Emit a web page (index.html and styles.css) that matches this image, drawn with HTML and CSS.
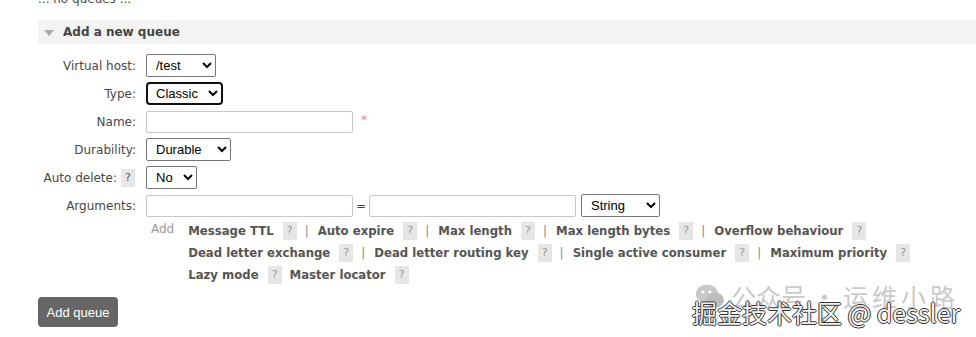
FILE: index.html
```html
<!DOCTYPE html>
<html lang="en">
<head>
    <meta charset="UTF-8">
    <title>Queues</title>
    <link rel="stylesheet" href="styles.css">
</head>
<body>
    <div class="main">
        <p class="empty">... no queues ...</p>

        <div class="section">
            <h2 class="section-head"><span class="toggle"></span>Add a new queue</h2>

            <form class="form">
                <label class="lbl">Virtual host:</label>
                <div class="ctl">
                    <select class="w-vhost"><option>/test</option></select>
                </div>

                <label class="lbl">Type:</label>
                <div class="ctl">
                    <select class="w-type focused"><option>Classic</option></select>
                </div>

                <label class="lbl">Name:</label>
                <div class="ctl">
                    <input type="text" class="w-text"><span class="mand">*</span>
                </div>

                <label class="lbl">Durability:</label>
                <div class="ctl">
                    <select class="w-dur"><option>Durable</option></select>
                </div>

                <label class="lbl">Auto delete: <span class="help">?</span></label>
                <div class="ctl">
                    <select class="w-no"><option>No</option></select>
                </div>

                <label class="lbl">Arguments:</label>
                <div class="ctl">
                    <input type="text" class="w-text"><span class="eq">=</span><input type="text" class="w-text">
                    <select class="w-str"><option>String</option></select>
                </div>

                <div></div>
                <div class="args">
                    <span class="add">Add</span>
                    <div class="arg-list">
                        <div class="arg-line">
                            <b>Message TTL</b><span class="help">?</span><span class="sep">|</span>
                            <b>Auto expire</b><span class="help">?</span><span class="sep">|</span>
                            <b>Max length</b><span class="help">?</span><span class="sep">|</span>
                            <b>Max length bytes</b><span class="help">?</span><span class="sep">|</span>
                            <b>Overflow behaviour</b><span class="help">?</span>
                        </div>
                        <div class="arg-line">
                            <b>Dead letter exchange</b><span class="help">?</span><span class="sep">|</span>
                            <b>Dead letter routing key</b><span class="help">?</span><span class="sep">|</span>
                            <b>Single active consumer</b><span class="help">?</span><span class="sep">|</span>
                            <b>Maximum priority</b><span class="help">?</span>
                        </div>
                        <div class="arg-line">
                            <b>Lazy mode</b><span class="help">?</span>
                            <b>Master locator</b><span class="help">?</span>
                        </div>
                    </div>
                </div>
            </form>

            <button class="btn" type="button">Add queue</button>
        </div>
    </div>

    <div class="watermark">
        <div class="wm-top">
            <svg class="wechat" width="30" height="26" viewBox="0 0 30 26">
                <ellipse cx="12" cy="11" rx="11" ry="9.5" fill="#c9c9c9"/>
                <circle cx="8" cy="9" r="1.6" fill="#fff"/>
                <circle cx="15" cy="9" r="1.6" fill="#fff"/>
                <ellipse cx="20" cy="17" rx="9" ry="7.5" fill="#bdbdbd"/>
            </svg>
            <span>公众号</span><span class="wm-dot">·</span><span class="wm-name">运维小路</span>
        </div>
        <div class="wm-bottom">掘金技术社区 @ dessler</div>
    </div>
</body>
</html>
```

FILE: styles.css
```css
body {
    margin: 0;
    font-family: "DejaVu Sans", Verdana, sans-serif;
    font-size: 12px;
    color: #484848;
    background: #ffffff;
    overflow: hidden;
}

.main {
    padding-left: 38px;
}

.empty {
    margin: -9px 0 0 0;
    line-height: 16px;
    height: 13px;
    color: #484848;
}

.section-head {
    margin: 16px 0 0 0;
    height: 24px;
    display: flex;
    align-items: center;
    background: #f3f3f3;
    font-size: 12px;
    font-weight: bold;
    color: #444;
}

.toggle {
    width: 0;
    height: 0;
    margin: 1px 9px 0 6px;
    border-left: 5px solid transparent;
    border-right: 5px solid transparent;
    border-top: 6px solid #aaa;
}

.form {
    display: grid;
    grid-template-columns: 98px auto;
    column-gap: 10px;
    row-gap: 5px;
    margin-top: 10px;
}

.lbl {
    display: flex;
    justify-content: flex-end;
    align-items: center;
    gap: 4px;
    height: 23px;
    white-space: nowrap;
}

.ctl {
    display: flex;
    align-items: center;
    height: 23px;
}

select {
    height: 23px;
    font-family: "Liberation Sans", Arial, sans-serif;
    font-size: 13px;
    color: #000;
    background: #fff;
    border: 1px solid #767676;
    border-radius: 2px;
    padding: 0 2px 0 5px;
}

select.focused {
    border: 2px solid #111;
    border-radius: 4px;
    padding-left: 4px;
}

.w-vhost { width: 70px; }
.w-type { width: 77px; }
.w-dur { width: 85px; }
.w-no { width: 51px; }
.w-str { width: 79px; margin-left: 5px; }

input.w-text {
    box-sizing: border-box;
    width: 207px;
    height: 22px;
    border: 1px solid #c8c8c8;
    border-radius: 2px;
    margin: 0;
}

.mand {
    color: #e88;
    margin-left: 8px;
    margin-top: -4px;
    font-size: 12px;
}

.eq {
    width: 16px;
    text-align: center;
}

.help {
    display: inline-block;
    width: 14px;
    height: 18px;
    line-height: 18px;
    text-align: center;
    background: #e6e6e6;
    color: #999;
    font-size: 11px;
    font-weight: normal;
}

.lbl .help {
    color: #555;
    margin-right: 1px;
}

.args {
    display: flex;
    align-items: flex-start;
    margin-top: -2px;
}

.add {
    color: #999;
    margin: 0 14px 0 5px;
    line-height: 18px;
}

.arg-line {
    display: flex;
    align-items: center;
    height: 22px;
    white-space: nowrap;
}

.arg-line b {
    color: #555;
    font-size: 11.7px;
    margin-right: 9px;
}

.arg-line .help {
    margin-right: 8px;
}

.sep {
    color: #888;
    margin-right: 9px;
}

.btn {
    margin-top: 11px;
    width: 80px;
    height: 30px;
    border: none;
    border-radius: 4px;
    background: #666;
    color: #fff;
    font-family: "Liberation Sans", Arial, sans-serif;
    font-size: 13px;
    padding: 0;
}

.watermark {
    position: absolute;
    left: 692px;
    top: 281px;
    font-family: "Noto Sans CJK SC", sans-serif;
}

.wm-top {
    display: flex;
    align-items: center;
    gap: 6px;
    margin-left: 3px;
    color: #cacaca;
    font-size: 25px;
    line-height: 30px;
    white-space: nowrap;
}

.wm-name {
    letter-spacing: 4px;
}

.wm-bottom {
    margin-top: -14px;
    font-size: 25px;
    line-height: 30px;
    color: #f2f2f2;
    text-shadow: 1px 0 #333, -1px 0 #333, 0 1px #333, 0 -1px #333;
    white-space: nowrap;
}
```
